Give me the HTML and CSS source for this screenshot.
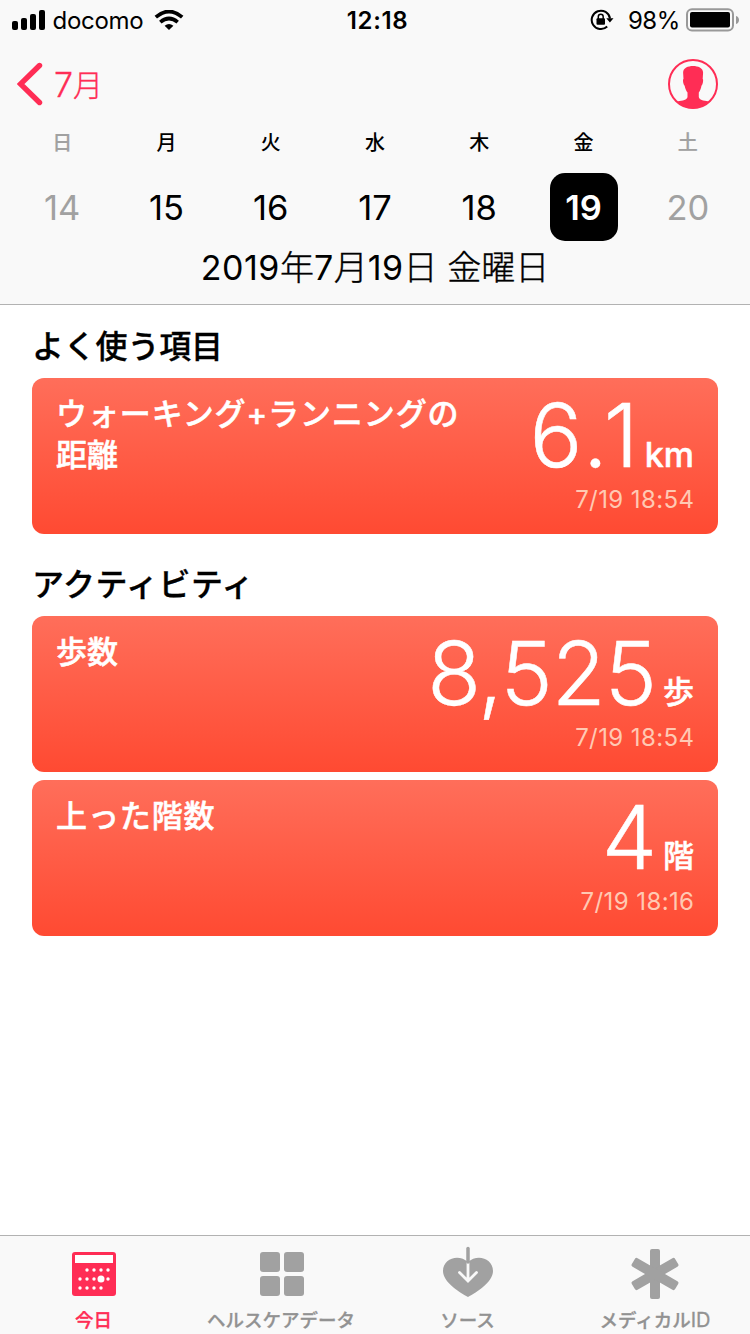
FILE: index.html
```html
<!DOCTYPE html>
<html lang="ja">
<head>
<meta charset="utf-8">
<title>ヘルスケア</title>
<link rel="stylesheet" href="styles.css">
</head>
<body>
<div class="screen">
  <header class="header">
    <div class="status">
      <div class="status-left">
        <svg class="signal" width="34" height="20" viewBox="0 0 34 20"><rect x="0" y="11" width="6" height="9" rx="2"/><rect x="9" y="8" width="6" height="12" rx="2"/><rect x="18" y="4" width="6" height="16" rx="2"/><rect x="27" y="0" width="6" height="20" rx="2"/></svg>
        <span class="carrier">docomo</span>
        <svg class="wifi" width="30" height="20" viewBox="0 0 30 20"><path d="M1.800 7.200Q15-4.200 28.200 7.200M6.300 12.200Q15 4.800 23.700 12.200" fill="none" stroke="#000" stroke-width="3.700"/><path d="M10.600 15.800Q15 12.200 19.400 15.800L15 20Z"/></svg>
      </div>
      <span class="clock">12:18</span>
      <div class="status-right">
        <svg class="lock" width="24" height="22" viewBox="0 0 24 22"><path d="M17.200 17.600A9.200 9.200 0 1 1 20 9.500" fill="none" stroke="#000" stroke-width="2"/><path d="M16.300 9.200h7.200l-3.600 4.300z"/><rect x="6.500" y="9.300" width="8.500" height="6.500" rx="1"/><path d="M8.300 10V7.700a2.450 2.450 0 0 1 4.900 0V10" fill="none" stroke="#000" stroke-width="1.500"/></svg>
        <span class="percent">98%</span>
        <svg class="battery" width="53" height="24" viewBox="0 0 53 24"><rect x="1" y="1.200" width="46" height="21.300" rx="5" fill="none" stroke="#999" stroke-width="2"/><rect x="4" y="4" width="40" height="15.500" rx="2"/><path d="M50 8c4 1 4 7 0 8z" fill="#999"/></svg>
      </div>
    </div>
    <div class="nav">
      <a class="back"><svg width="26" height="44" viewBox="0 0 26 44"><path d="M22.500 3.500L3.500 22L22.500 40.500" fill="none" stroke="#ff2d55" stroke-width="5.400" stroke-linecap="round"/></svg><span>7<span class="month">月</span></span></a>
      <svg class="profile" width="50" height="50" viewBox="0 0 50 50"><circle cx="25" cy="25" r="24" fill="none" stroke="#ff2d55" stroke-width="2"/><path d="M25 7C20 7 15.200 9 15.100 13.500L15.500 20C14.400 20.300 15.400 26 16.600 26.600C17.200 29.700 18.200 32 19.500 33.500V38C19 41 15 41.500 9.500 42.400Q16 49.500 25 49.500T40.500 42.400C35 41.500 31.300 41 30.800 38V33.500C32 32 33 29.700 33.500 26.600C34.800 26 35.700 20.300 34.700 20L35.100 13.500C35 9 30 7 25 7Z" fill="#ff2d55"/></svg>
    </div>
    <div class="week">
      <div class="day off"><span class="dow">日</span><span class="num">14</span></div>
      <div class="day"><span class="dow">月</span><span class="num">15</span></div>
      <div class="day"><span class="dow">火</span><span class="num">16</span></div>
      <div class="day"><span class="dow">水</span><span class="num">17</span></div>
      <div class="day"><span class="dow">木</span><span class="num">18</span></div>
      <div class="day"><span class="dow">金</span><span class="num selected">19</span></div>
      <div class="day off"><span class="dow">土</span><span class="num">20</span></div>
    </div>
    <div class="date"><b>2019</b>年<b>7</b>月<b>19</b>日 金曜日</div>
  </header>
  <main class="content">
    <h2 class="heading">よく使う項目</h2>
    <section class="card">
      <h3 class="title"><span class="kana">ウォーキング+ランニングの</span><br>距離</h3>
      <div class="reading"><div class="value"><span class="figure decimal">6.1</span><span class="unit latin">km</span></div><time class="time">7/19 18:54</time></div>
    </section>
    <h2 class="heading second">アクティビティ</h2>
    <section class="card">
      <h3 class="title">歩数</h3>
      <div class="reading"><div class="value"><span class="figure">8,525</span><span class="unit">歩</span></div><time class="time">7/19 18:54</time></div>
    </section>
    <section class="card">
      <h3 class="title"><span class="kana">上った階数</span></h3>
      <div class="reading"><div class="value"><span class="figure">4</span><span class="unit">階</span></div><time class="time">7/19 18:16</time></div>
    </section>
  </main>
  <nav class="tabs">
    <a class="tab active">
      <svg width="54" height="54" viewBox="0 0 54 54"><rect x="5" y="6" width="44" height="44" rx="3" fill="#ff2d55"/><path d="M8 9h38v8H8z" fill="#fff"/><g fill="#fff"><circle cx="20" cy="24" r="1.700"/><circle cx="27" cy="24" r="1.700"/><circle cx="34" cy="24" r="1.700"/><circle cx="41" cy="24" r="1.700"/><circle cx="13" cy="33" r="1.700"/><circle cx="20" cy="33" r="1.700"/><circle cx="27" cy="33" r="1.700"/><circle cx="34" cy="33" r="3.500"/><circle cx="41" cy="33" r="1.700"/><circle cx="13" cy="42" r="1.700"/><circle cx="20" cy="42" r="1.700"/><circle cx="27" cy="42" r="1.700"/><circle cx="34" cy="42" r="1.700"/></g></svg>
      <span>今日</span>
    </a>
    <a class="tab">
      <svg class="grid-icon" width="54" height="54" viewBox="0 0 54 54" fill="#a1a1a1"><rect x="5" y="6" width="20" height="20" rx="3"/><rect x="29" y="6" width="20" height="20" rx="3"/><rect x="5" y="30" width="20" height="20" rx="3"/><rect x="29" y="30" width="20" height="20" rx="3"/></svg>
      <span>ヘルスケアデータ</span>
    </a>
    <a class="tab">
      <svg width="54" height="54" viewBox="0 0 54 54"><path d="M27 51C18 46 2 36 2 25C2 12 18 7.500 27 16C36 7.500 52 12 52 25C52 36 36 46 27 51Z" fill="#a1a1a1"/><path d="M27 17V34M18.500 26.500L27 35L35.500 26.500" fill="none" stroke="#f9f9f9" stroke-width="2.800" stroke-linecap="round"/><path d="M27 2.500V16" stroke="#a1a1a1" stroke-width="3.500" stroke-linecap="round"/></svg>
      <span>ソース</span>
    </a>
    <a class="tab">
      <svg width="54" height="54" viewBox="0 0 54 54" fill="#a1a1a1"><rect x="22" y="3" width="10" height="50" rx="2"/><rect x="22" y="3" width="10" height="50" rx="2" transform="rotate(60 27 28)"/><rect x="22" y="3" width="10" height="50" rx="2" transform="rotate(120 27 28)"/></svg>
      <span>メディカル<i>ID</i></span>
    </a>
  </nav>
</div>
</body>
</html>
```
FILE: styles.css
```css
* { box-sizing: border-box; }
body { margin: 0; background: #fff; color: #000; font-family: Inter, "Noto Sans CJK JP", sans-serif; }
svg { display: block; flex: none; }
h2, h3 { margin: 0; }

.screen { width: 750px; height: 1334px; display: flex; flex-direction: column; }
.header { height: 305px; flex: none; background: #f9f9f9; border-bottom: 1px solid #b2b2b2; }

.status { height: 40px; display: grid; grid-template-columns: 1fr auto 1fr; align-items: center; padding: 0 11px 0 12px; font-size: 24px; line-height: 38px; }
.status span { padding-top: 2px; }
.status-left, .status-right { display: flex; align-items: center; }
.status-right { justify-content: flex-end; }
.carrier { width: 91px; margin-left: 6.5px; letter-spacing: -0.3px; }
.wifi { margin-left: 10px; }
.clock { padding-left: 4px; font-weight: 600; letter-spacing: 0.6px; }
.lock { margin-right: -1px; }
.percent { margin: 0 6px 0 15px; letter-spacing: -0.4px; }

.nav { height: 88px; display: flex; justify-content: space-between; align-items: center; padding: 0 32px 0 17px; }
.back { display: flex; align-items: center; gap: 11px; color: #ff2d55; font-size: 34px; font-weight: 300; line-height: 44px; -webkit-text-stroke: 0.3px; }
.back > span { padding-top: 1px; }
.month { font-size: 30px; vertical-align: 1px; line-height: 1; }

.week { display: grid; grid-template-columns: repeat(7, 1fr); padding: 0 10px; }
.day { display: flex; flex-direction: column; align-items: center; }
.dow { height: 45px; font-size: 20px; font-weight: 500; line-height: 30px; }
.num { width: 68px; height: 68px; border-radius: 15px; font-size: 34.5px; line-height: 69px; text-align: center; }
.off { color: #a1a1a1; }
.off .dow { -webkit-text-stroke: 0.2px; }
.selected { background: #000; color: #fff; font-weight: 600; }
.date { font-size: 34px; font-weight: 300; line-height: 54px; text-align: center; -webkit-text-stroke: 0.4px; }
.date b { font-weight: 400; letter-spacing: 0.5px; -webkit-text-stroke: 0; }

.content { flex: 1; padding: 17px 32px 0; }
.heading { font-size: 32px; line-height: 50px; font-weight: 500; margin-bottom: 6px; letter-spacing: -0.2px; -webkit-text-stroke: 0.3px; }
.second { margin-top: 26px; letter-spacing: 0.5px; }
.card { height: 156px; display: flex; justify-content: space-between; padding: 15px 24px 0; border-radius: 12px; background: linear-gradient(#ff6e5a, #ff4a32); color: #fff; }
.card + .card { margin-top: 8px; }
.title { font-size: 31px; line-height: 41px; font-weight: 500; white-space: nowrap; -webkit-text-stroke: 0.5px; }
.kana { letter-spacing: 0.9px; }
.reading { display: flex; flex-direction: column; align-items: flex-end; }
.value { display: flex; align-items: baseline; height: 90px; line-height: 84px; }
.figure { font-size: 88px; font-weight: 300; line-height: 84px; letter-spacing: -1px; -webkit-text-stroke: 0.5px; }
.decimal { letter-spacing: 3.5px; }
.unit { margin-left: 7px; padding-bottom: 0; font-size: 31px; line-height: 40px; font-weight: 500; transform: translateY(-2px); -webkit-text-stroke: 0.5px; }
.latin { margin-left: 3px; font-weight: 500; font-size: 34px; transform: none; }
.time { font-size: 24px; line-height: 34px; color: #ffc9b3; letter-spacing: 0.4px; margin-right: -0.4px; }

.tabs { height: 99px; flex: none; display: grid; grid-template-columns: 187px 188px 185px 190px; border-top: 1px solid #b2b2b2; background: #f9f9f9; color: #929292; }
.tab { display: flex; flex-direction: column; align-items: center; padding-top: 10px; font-size: 18.5px; line-height: 28px; font-weight: 500; white-space: nowrap; }
.tab span { margin-top: 6px; -webkit-text-stroke: 0.3px; }
.tab i { font-style: normal; font-weight: 400; font-size: 20px; }
.grid-icon { margin-left: 2px; }
.active { color: #ff2d55; }
```
